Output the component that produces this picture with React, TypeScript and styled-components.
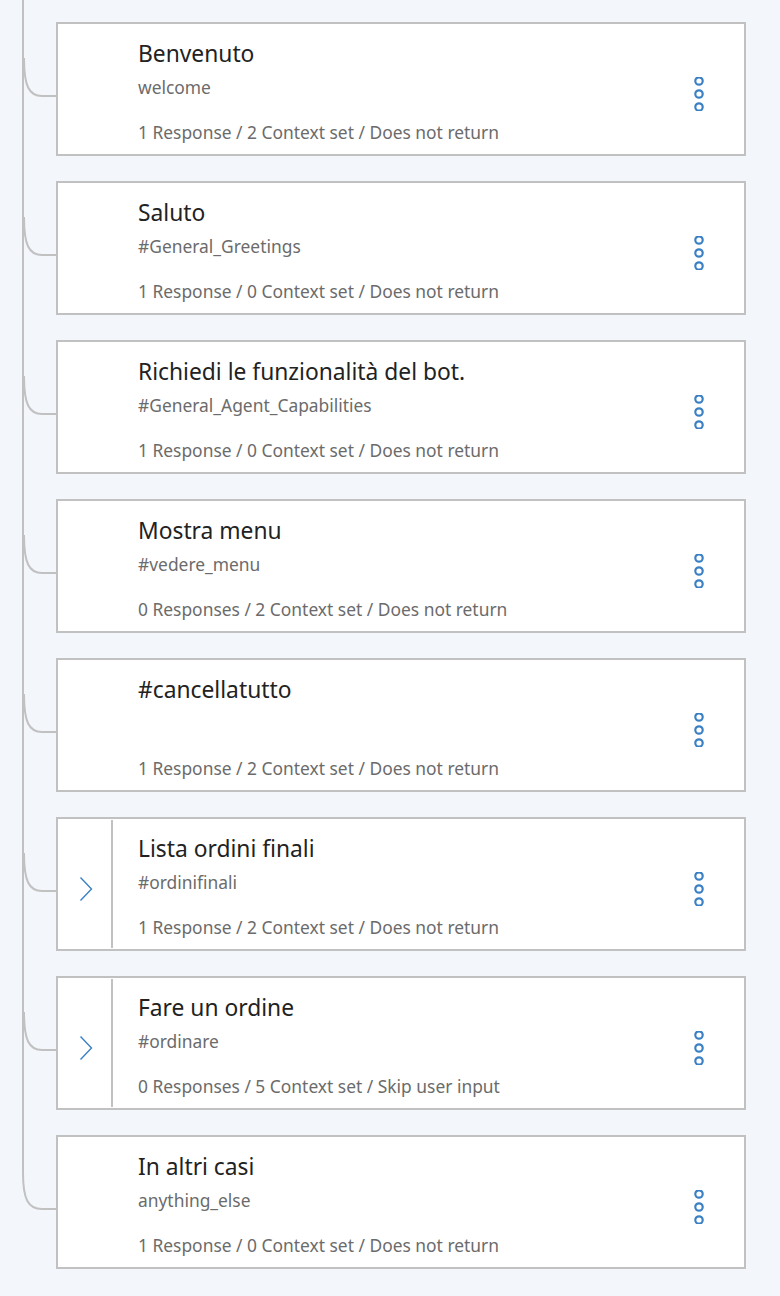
import React from "react";
import styled, { createGlobalStyle } from "styled-components";

const GlobalStyle = createGlobalStyle`
  body {
    margin: 0;
    background-color: #f3f6fb;
    font-family: "Noto Sans", "Open Sans", sans-serif;
  }
`;

const Tree = styled.div`
  display: flex;
  flex-direction: column;
  padding-bottom: 23px;
`;

const Row = styled.div`
  display: flex;
  align-items: flex-start;
  height: 159px;
`;

const Connector = styled.svg`
  flex: 0 0 56px;
  display: block;
`;

const Card = styled.div`
  flex: 0 0 690px;
  height: 134px;
  margin-top: 22px;
  box-sizing: border-box;
  background-color: #ffffff;
  border: 2px solid #c1c1c1;
  display: flex;
  align-items: stretch;
`;

const Toggle = styled.div<{ $expandable: boolean }>`
  flex: 0 0 55px;
  margin: 1px 0;
  border-right: 2px solid ${(p) => (p.$expandable ? "#c1c1c1" : "transparent")};
  display: flex;
  align-items: center;
  justify-content: center;
  padding: 10px 0 0 3px;
  box-sizing: border-box;
`;

const Body = styled.div`
  flex: 1;
  padding: 15px 0 0 25px;
  display: flex;
  flex-direction: column;
`;

const Title = styled.div`
  font-size: 22.8px;
  line-height: 30px;
  color: #222222;
`;

const Condition = styled.div`
  font-size: 17.4px;
  line-height: 22px;
  margin-top: 7px;
  height: 22px;
  color: #6b6b6b;
`;

const Meta = styled.div`
  font-size: 17.4px;
  line-height: 22px;
  margin-top: 23px;
  color: #6b6b6b;
`;

const Menu = styled.div`
  flex: 0 0 90px;
  display: flex;
  align-items: center;
  justify-content: center;
  padding-top: 9px;
`;

type Node = {
  title: string;
  condition: string;
  meta: string;
  expandable?: boolean;
};

const nodes: Node[] = [
  { title: "Benvenuto", condition: "welcome", meta: "1 Response / 2 Context set / Does not return" },
  { title: "Saluto", condition: "#General_Greetings", meta: "1 Response / 0 Context set / Does not return" },
  { title: "Richiedi le funzionalità del bot.", condition: "#General_Agent_Capabilities", meta: "1 Response / 0 Context set / Does not return" },
  { title: "Mostra menu", condition: "#vedere_menu", meta: "0 Responses / 2 Context set / Does not return" },
  { title: "#cancellatutto", condition: "", meta: "1 Response / 2 Context set / Does not return" },
  { title: "Lista ordini finali", condition: "#ordinifinali", meta: "1 Response / 2 Context set / Does not return", expandable: true },
  { title: "Fare un ordine", condition: "#ordinare", meta: "0 Responses / 5 Context set / Skip user input", expandable: true },
  { title: "In altri casi", condition: "anything_else", meta: "1 Response / 0 Context set / Does not return" },
];

const Branch = ({ last }: { last: boolean }) => (
  <Connector width="56" height="159" viewBox="0 0 56 159">
    {!last && <line x1="23" y1="0" x2="23" y2="159" stroke="#c1c1c1" strokeWidth="2" />}
    <path
      d={last ? "M23 0 L23 60 C23 86 28 96 42 96 L56 96" : "M24 58 C24 86 29 96 42 96 L56 96"}
      fill="none"
      stroke="#c1c1c1"
      strokeWidth="2"
    />
  </Connector>
);

const Kebab = () => (
  <svg width="12" height="34" viewBox="0 0 12 34">
    {[4, 17, 30].map((cy) => (
      <circle key={cy} cx="6" cy={cy} r="3.7" fill="none" stroke="#3b80c4" strokeWidth="2.2" />
    ))}
  </svg>
);

const Chevron = () => (
  <svg width="14" height="26" viewBox="0 0 14 26">
    <path d="M1.5 1.5 L12.5 13 L1.5 24.5" fill="none" stroke="#3b80c4" strokeWidth="1.4" />
  </svg>
);

const App = () => {
  return (
    <>
      <GlobalStyle />
      <Tree>
        {nodes.map((n, i) => (
          <Row key={n.title}>
            <Branch last={i === nodes.length - 1} />
            <Card>
              <Toggle $expandable={!!n.expandable}>{n.expandable && <Chevron />}</Toggle>
              <Body>
                <Title>{n.title}</Title>
                <Condition>{n.condition}</Condition>
                <Meta>{n.meta}</Meta>
              </Body>
              <Menu>
                <Kebab />
              </Menu>
            </Card>
          </Row>
        ))}
      </Tree>
    </>
  );
};

export default App;
